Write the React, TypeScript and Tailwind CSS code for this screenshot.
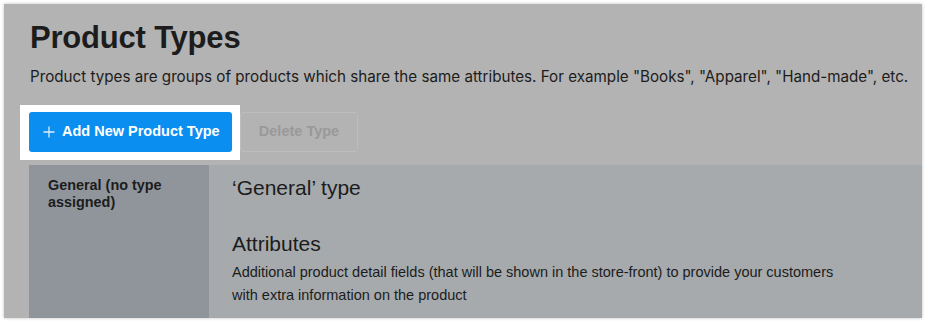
import React from "react";

export default function App() {
  return (
    <div className="w-[927px] h-[324px] bg-white p-[4px] pr-[5px] pb-[6px]" style={{ fontFamily: '"Liberation Sans", Arial, sans-serif' }}>
      <div className="w-[918px] h-[314px] bg-[#b3b3b3] shadow-[0_0_3px_rgba(0,0,0,0.25)] flex flex-col overflow-hidden">
        <h1 className="ml-[26px] mt-[15px] text-[31px] leading-[38px] font-bold text-[#1c1c1c] tracking-[-0.2px]">Product Types</h1>
        <p className="ml-[26px] mt-[10px] text-[15.2px] leading-[20px] text-[#1c1c1c]" style={{ fontFamily: 'Inter, "Liberation Sans", sans-serif' }}>
          Product types are groups of products which share the same attributes. For example "Books", "Apparel", "Hand-made", etc.
        </p>
        <div className="flex items-start mt-[18px] ml-[16px]">
          <div className="bg-white pt-[7px] pb-[8px] pl-[9px] pr-[8px]">
            <button className="h-[40px] w-[203px] rounded-[3px] bg-[#0a8ef0] text-white text-[14.5px] font-bold flex items-center pl-[14px] gap-[7px]">
              <svg width="12" height="12" viewBox="0 0 12 12" className="shrink-0">
                <path d="M6 0.5V11.5M0.5 6H11.5" stroke="white" strokeWidth="1.3" fill="none" strokeOpacity="0.85" />
              </svg>
              <span>Add New Product Type</span>
            </button>
          </div>
          <button className="mt-[7px] h-[40px] w-[118px] rounded-[3px] border border-[#bdbdbd] text-[#999999] text-[14.5px] font-bold">Delete Type</button>
        </div>
        <div className="flex flex-1 ml-[25px] mt-[5px]">
          <div className="w-[180px] bg-[#8f959b] pl-[19px] pt-[12px]">
            <div className="text-[14.4px] leading-[17px] font-bold text-[#1c1c1c] w-[135px]">General (no type assigned)</div>
          </div>
          <div className="flex-1 bg-[#a6aaad] pl-[23px] pt-[10px]">
            <h2 className="text-[21px] leading-[26px] text-[#1c1c1c]">‘General’ type</h2>
            <h3 className="mt-[30px] text-[21px] leading-[26px] text-[#1c1c1c]">Attributes</h3>
            <p className="mt-[4px] text-[14.5px] leading-[23px] text-[#1c1c1c] w-[622px]">
              Additional product detail fields (that will be shown in the store-front) to provide your customers with extra information on the product
            </p>
          </div>
        </div>
      </div>
    </div>
  );
}
